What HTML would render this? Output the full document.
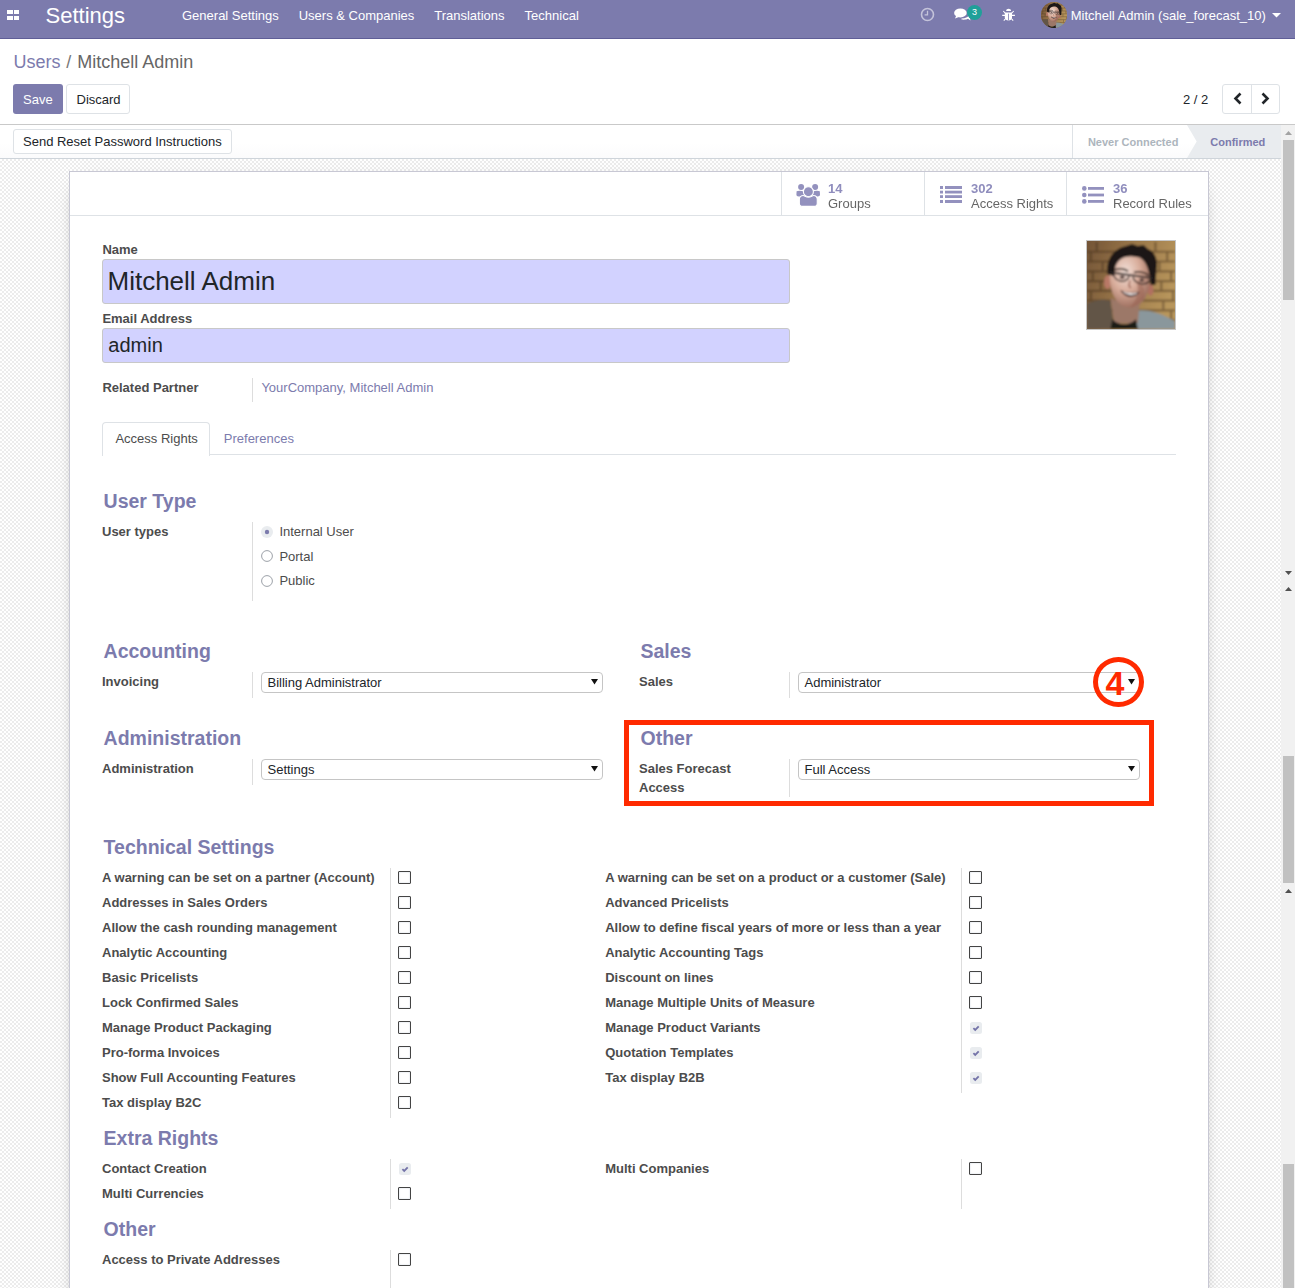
<!DOCTYPE html>
<html><head><meta charset="utf-8"><style>
html,body{margin:0;padding:0;width:1295px;height:1288px;overflow:hidden;background:#fff;position:relative;font-family:"Liberation Sans", sans-serif;}
.t{position:absolute;white-space:nowrap;line-height:1;font-family:"Liberation Sans", sans-serif;}
</style></head><body>
<svg width="0" height="0" style="position:absolute"><defs>
<filter id="bl" x="-5%" y="-5%" width="110%" height="110%"><feGaussianBlur stdDeviation="1.0"/></filter>
<linearGradient id="bgg" x1="0" y1="0" x2="1" y2="0.3"><stop offset="0" stop-color="#6e5034"/><stop offset="0.5" stop-color="#987548"/><stop offset="1" stop-color="#b8965c"/></linearGradient>
<radialGradient id="skin" cx="0.4" cy="0.35" r="0.65"><stop offset="0" stop-color="#f2e0d8"/><stop offset="0.55" stop-color="#d8ac9a"/><stop offset="1" stop-color="#a07262"/></radialGradient>
<g id="face"><g filter="url(#bl)">
<rect x="-5" y="-5" width="100" height="100" fill="url(#bgg)"/>
<g stroke="#3e2a18" stroke-width="2.2" opacity="0.45">
<path d="M0 11H90M0 21H90M0 31H90M0 41H90M0 51H90M0 61H90M0 71H90M0 81H90"/>
<path d="M70 1V11M82 11V21M74 21V31M86 31V41M76 41V51M88 51V61M78 61V71M86 71V81M10 1V11M4 11V21M16 21V31M6 31V41M14 41V51M4 51V61"/>
</g>
<path d="M0 64 C8 60 16 59 24 61 L28 90 H0Z" fill="#625446"/>
<path d="M46 72 C60 68 76 74 90 82 V90 H42Z" fill="#8a979c"/>
<path d="M24 58 C30 62 48 64 54 60 L52 84 H28Z" fill="#9c7868"/>
<path d="M26 80 C32 87 44 87 50 80 L52 90 H24Z" fill="#1e1a18"/>
<ellipse cx="21" cy="42" rx="3.6" ry="7" fill="#b87866"/>
<ellipse cx="65" cy="50" rx="3" ry="6" fill="#b07060"/>
<path d="M23 36 C22 22 30 13 44 12 C58 12 66 22 64 40 C64 56 56 68 44 68 C32 68 24 56 23 36Z" fill="url(#skin)"/>
<path d="M50 40 C56 42 60 48 58 58 C54 64 48 67 44 68 C52 60 54 50 50 40Z" fill="#9a6454" opacity="0.55"/>
<path d="M21 34 C19 20 26 8 40 5 L46 3 L52 5 L58 4 L62 8 C70 11 73 20 71 30 L70 45 L65 45 C64 32 62 22 54 17 C44 14 33 15 29 26 L28 36Z" fill="#1c1816"/>
<path d="M28 30 C32 28 38 28 42 31 M48 32 C53 31 59 32 63 35" stroke="#3a2a24" stroke-width="1.8" fill="none"/>
<path d="M23 32 L67 38" stroke="#2a2222" stroke-width="2"/>
<path d="M27 33 C28 42 40 44 43 36 M47 37 C49 45 62 46 65 39" stroke="#3a2c28" stroke-width="1.5" fill="none"/>
<ellipse cx="36" cy="37" rx="2.6" ry="1.6" fill="#4a3430"/>
<ellipse cx="56" cy="40" rx="2.6" ry="1.6" fill="#4a3430"/>
<path d="M44 40 C43 44 42 47 45 48" stroke="#a06858" stroke-width="1.4" fill="none"/>
<path d="M34 50 C40 53 48 54 54 52 C50 59 39 59 34 50Z" fill="#3a2020"/>
<path d="M36 51.5 C41 53.5 47 54 52 53 C49 56 41 56.5 36 51.5Z" fill="#f4eeec"/>
</g></g></defs></svg>
<div style="position:absolute;left:0px;top:0px;width:1295px;height:38px;background:#7C7BAD;"></div>
<div style="position:absolute;left:0px;top:38px;width:1295px;height:1px;background:#5f5e97;"></div>
<div style="position:absolute;left:7px;top:9.8px;width:5.6px;height:4.6px;background:#fff"></div>
<div style="position:absolute;left:13.6px;top:9.8px;width:5.6px;height:4.6px;background:#fff"></div>
<div style="position:absolute;left:7px;top:15.700000000000001px;width:5.6px;height:4.6px;background:#fff"></div>
<div style="position:absolute;left:13.6px;top:15.700000000000001px;width:5.6px;height:4.6px;background:#fff"></div>
<div class="t" style="left:45.60px;top:4.58px;font-size:22px;color:#fff;">Settings</div>
<div class="t" style="left:182.00px;top:9.40px;font-size:13px;color:#fff;">General Settings</div>
<div class="t" style="left:298.70px;top:9.40px;font-size:13px;color:#fff;">Users &amp; Companies</div>
<div class="t" style="left:434.20px;top:9.40px;font-size:13px;color:#fff;">Translations</div>
<div class="t" style="left:524.60px;top:9.40px;font-size:13px;color:#fff;">Technical</div>
<svg style="position:absolute;left:919px;top:6px" width="17" height="17" viewBox="0 0 17 17"><circle cx="8.5" cy="8.5" r="6" fill="none" stroke="rgba(255,255,255,0.55)" stroke-width="1.6"/><path d="M8.5 4.8V8.8H5.6" fill="none" stroke="rgba(255,255,255,0.55)" stroke-width="1.3"/></svg>
<svg style="position:absolute;left:954px;top:8px" width="18" height="14" viewBox="0 0 18 14"><ellipse cx="6.4" cy="4.9" rx="6.3" ry="4.5" fill="#fff"/><path d="M2.2 7.8 L1 10.6 L5.6 8.8 Z" fill="#fff"/><path d="M7.5 11.6 C10.5 12 13 11.5 14 10.8 L16.5 12.6 L15.8 9.8 C16.6 8.8 16.8 7.6 16.2 6.4 C15 8.8 11.5 10.2 7.5 10.4 Z" fill="#fff"/></svg>
<div style="position:absolute;left:967px;top:4.6px;width:15px;height:15px;border-radius:50%;background:#1fa099;color:#fff;font-size:9px;line-height:15px;text-align:center;font-family:Liberation Sans,sans-serif">3</div>
<svg style="position:absolute;left:995px;top:4px" width="26" height="20" viewBox="0 0 26 20"><path d="M11.1 6.9 C11.1 4 16.1 4 16.1 6.9 Z" fill="#fff"/><path d="M9.8 8.4 H17 V13.3 C17 15.6 15.5 16.4 13.4 16.4 C11.3 16.4 9.8 15.6 9.8 13.3 Z" fill="#fff"/><rect x="13" y="9.6" width="0.9" height="6.8" fill="#8d8cba"/><path d="M8.3 7 L10.5 9.5 M18.7 7 L16.4 9.5 M7.2 11.4 H10 M17 11.4 H19.9 M8.8 16.6 L10.7 14.5 M18.2 16.6 L16.3 14.5" stroke="#fff" stroke-width="1.1"/></svg>
<div style="position:absolute;left:1041px;top:2px;width:26px;height:26px;border-radius:50%;overflow:hidden;background:#8a6a45"><svg width="26" height="26" viewBox="0 0 90 90" style="display:block"><use href="#face"/></svg></div>
<div class="t" style="left:1070.70px;top:9.00px;font-size:13px;color:#fff;">Mitchell Admin (sale_forecast_10)</div>
<svg style="position:absolute;left:1272px;top:13px" width="9" height="5" viewBox="0 0 9 5"><path d="M0 0H9L4.5 4.5Z" fill="#fff"/></svg>
<div class="t" style="left:13.60px;top:52.96px;font-size:18px;color:#666;"><span style="color:#7C7BAD">Users</span> <span style="color:#777;margin-left:0.6px">/</span> <span style="color:#666;margin-left:1px">Mitchell Admin</span></div>
<div style="position:absolute;left:13px;top:84px;width:50px;height:30px;border-radius:3px;background:#7C7BAD;"></div>
<div class="t" style="left:23.00px;top:93.00px;font-size:13px;color:#fff;">Save</div>
<div style="position:absolute;left:66px;top:84px;width:62px;height:28px;border-radius:3px;border:1px solid #dee2e6;background:#fff"></div>
<div class="t" style="left:76.50px;top:93.00px;font-size:13px;color:#212529;">Discard</div>
<div class="t" style="left:1183.00px;top:93.00px;font-size:13px;color:#212529;">2 / 2</div>
<div style="position:absolute;left:1222px;top:84px;width:56px;height:28px;border-radius:3px;border:1px solid #dee2e6;background:#fff"></div>
<div style="position:absolute;left:1251px;top:85px;width:1px;height:28px;background:#dee2e6;"></div>
<svg style="position:absolute;left:1232.8px;top:92.4px" width="10" height="13" viewBox="0 0 10 13"><path d="M7.5 1.5 L2.5 6.5 L7.5 11.5" fill="none" stroke="#212529" stroke-width="2.6"/></svg>
<svg style="position:absolute;left:1259.7px;top:92.4px" width="10" height="13" viewBox="0 0 10 13"><path d="M2.5 1.5 L7.5 6.5 L2.5 11.5" fill="none" stroke="#212529" stroke-width="2.6"/></svg>
<div style="position:absolute;left:0px;top:124px;width:1295px;height:1px;background:#c9c9c9;"></div>
<div style="position:absolute;left:0px;top:125px;width:1281px;height:33px;background:linear-gradient(#fff 55%,#fbfbfc);"></div>
<div style="position:absolute;left:0px;top:158px;width:1281px;height:1px;background:#ced4da;"></div>
<div style="position:absolute;left:13px;top:129px;width:217px;height:23px;border-radius:3px;border:1px solid #dee2e6;background:#fff"></div>
<div class="t" style="left:23.00px;top:134.90px;font-size:13px;color:#212529;">Send Reset Password Instructions</div>
<div style="position:absolute;left:1072px;top:125px;width:1px;height:33px;background:#dee2e6;"></div>
<svg style="position:absolute;left:1187px;top:125px" width="94" height="33" viewBox="0 0 94 33"><path d="M0 0H94V33H0L9.7 16.5Z" fill="#e9ecef"/></svg>
<div class="t" style="left:1087.90px;top:136.99px;font-size:11px;color:#adb5bd;font-weight:bold;">Never Connected</div>
<div class="t" style="left:1210.30px;top:136.99px;font-size:11px;color:#7C7BAD;font-weight:bold;">Confirmed</div>
<div style="position:absolute;left:0;top:159px;width:1281px;height:1129px;background-color:#fff;background-image:conic-gradient(#ececec 25%,#fff 0 50%,#ececec 0 75%,#fff 0);background-size:4px 4px;"></div>
<div style="position:absolute;left:1281px;top:125px;width:14px;height:1163px;background:#f1f1f1;"></div>
<svg style="position:absolute;left:1285px;top:131px" width="7" height="4" viewBox="0 0 7 4"><path d="M0 4H7L3.5 0Z" fill="#a3a3a3"/></svg>
<div style="position:absolute;left:1283px;top:140px;width:11px;height:160px;background:#c1c1c1;"></div>
<svg style="position:absolute;left:1285px;top:571px" width="7" height="4" viewBox="0 0 7 4"><path d="M0 0H7L3.5 4Z" fill="#505050"/></svg>
<svg style="position:absolute;left:1285px;top:587px" width="7" height="4" viewBox="0 0 7 4"><path d="M0 4H7L3.5 0Z" fill="#505050"/></svg>
<div style="position:absolute;left:1283px;top:756px;width:11px;height:127px;background:#c1c1c1;"></div>
<svg style="position:absolute;left:1285px;top:889px" width="7" height="4" viewBox="0 0 7 4"><path d="M0 4H7L3.5 0Z" fill="#505050"/></svg>
<div style="position:absolute;left:1283px;top:1164px;width:11px;height:124px;background:#c1c1c1;"></div>
<div style="position:absolute;left:69px;top:171px;width:1138px;height:1200px;background:#fff;border:1px solid #c8c8d4;box-shadow:0 5px 20px -15px #000;"></div>
<div style="position:absolute;left:70px;top:215px;width:1138px;height:1px;background:#dee2e6;"></div>
<div style="position:absolute;left:781px;top:172px;width:1px;height:43px;background:#dee2e6;"></div>
<div style="position:absolute;left:924px;top:172px;width:1px;height:43px;background:#dee2e6;"></div>
<div style="position:absolute;left:1066px;top:172px;width:1px;height:43px;background:#dee2e6;"></div>
<svg style="position:absolute;left:792px;top:180px" width="32" height="30" viewBox="0 0 32 30"><circle cx="9.1" cy="6.9" r="3.0" fill="#9391be"/><circle cx="23.1" cy="6.9" r="3.0" fill="#9391be"/><path d="M4.6 11.2 C6 10.4 9.5 10.5 11.6 11.4 C11.8 13 12.2 14.3 12.8 15.2 C10.5 16.1 8.6 16.5 6.8 16.5 C5.2 16.5 4.4 15.8 4.4 14.6 Z" fill="#9391be"/><path d="M27.8 11.2 C26.4 10.4 22.9 10.5 20.8 11.4 C20.6 13 20.2 14.3 19.6 15.2 C21.9 16.1 23.8 16.5 25.6 16.5 C27.2 16.5 28 15.8 28 14.6 Z" fill="#9391be"/><circle cx="16.4" cy="11.7" r="5.0" fill="#9391be" stroke="#fff" stroke-width="1.1"/><path d="M7.35 19.6 C7.35 17.2 9.2 15.55 11.2 15.55 C12.5 15.55 14 17.1 16.4 17.1 C18.8 17.1 20.3 15.55 21.6 15.55 C23.6 15.55 25.25 17.2 25.25 19.6 V23.5 C25.25 25.4 23.9 26.35 22 26.35 H10.6 C8.7 26.35 7.35 25.4 7.35 23.5 Z" fill="#9391be" stroke="#fff" stroke-width="1.1"/></svg>
<div class="t" style="left:828.40px;top:182.00px;font-size:13px;color:#8f8dbd;font-weight:bold;will-change:transform;">14</div>
<div class="t" style="left:828.40px;top:197.00px;font-size:13px;color:#666;will-change:transform;">Groups</div>
<svg style="position:absolute;left:940px;top:186px" width="22" height="17" viewBox="0 0 22 17"><g fill="#9391be"><rect x="0" y="0" width="3" height="3"/><rect x="5" y="0" width="17" height="3"/><rect x="0" y="4.7" width="3" height="2.8"/><rect x="5" y="4.7" width="17" height="2.8"/><rect x="0" y="9.2" width="3" height="2.8"/><rect x="5" y="9.2" width="17" height="2.8"/><rect x="0" y="14" width="3" height="3"/><rect x="5" y="14" width="17" height="3"/></g></svg>
<div class="t" style="left:971.00px;top:182.00px;font-size:13px;color:#8f8dbd;font-weight:bold;will-change:transform;">302</div>
<div class="t" style="left:971.00px;top:197.00px;font-size:13px;color:#666;will-change:transform;">Access Rights</div>
<svg style="position:absolute;left:1082px;top:186px" width="22" height="18" viewBox="0 0 22 18"><g fill="#9391be"><circle cx="2.3" cy="2.4" r="2.3"/><circle cx="2.3" cy="9" r="2.3"/><circle cx="2.3" cy="15.4" r="2.3"/><rect x="6" y="1" width="16" height="2.8"/><rect x="6" y="7.6" width="16" height="2.8"/><rect x="6" y="14" width="16" height="2.8"/></g></svg>
<div class="t" style="left:1113.20px;top:182.00px;font-size:13px;color:#8f8dbd;font-weight:bold;will-change:transform;">36</div>
<div class="t" style="left:1113.20px;top:197.00px;font-size:13px;color:#666;will-change:transform;">Record Rules</div>
<div style="position:absolute;left:1086px;top:240px;width:88px;height:88px;border:1px solid #c6c6c6;overflow:hidden"><svg width="88" height="88" viewBox="0 0 90 90" style="display:block"><use href="#face"/></svg></div>
<div class="t" style="left:102.40px;top:242.80px;font-size:13px;color:#4c4c4c;font-weight:bold;">Name</div>
<div style="position:absolute;left:102px;top:259px;width:686px;height:43px;background:#d2d2ff;border:1px solid #c8c8c8;border-radius:3px"></div>
<div class="t" style="left:107.50px;top:268.19px;font-size:26px;color:#212529;">Mitchell Admin</div>
<div class="t" style="left:102.40px;top:311.70px;font-size:13px;color:#4c4c4c;font-weight:bold;">Email Address</div>
<div style="position:absolute;left:102px;top:328px;width:686px;height:33px;background:#d2d2ff;border:1px solid #c8c8c8;border-radius:3px"></div>
<div class="t" style="left:108.30px;top:334.82px;font-size:20px;color:#212529;">admin</div>
<div class="t" style="left:102.40px;top:381.20px;font-size:13px;color:#4c4c4c;font-weight:bold;">Related Partner</div>
<div style="position:absolute;left:252px;top:378px;width:1px;height:24px;background:#dddddd;"></div>
<div class="t" style="left:261.40px;top:381.20px;font-size:13px;color:#7C7BAD;">YourCompany, Mitchell Admin</div>
<div style="position:absolute;left:209px;top:454px;width:967px;height:1px;background:#dee2e6;"></div>
<div style="position:absolute;left:102px;top:422px;width:106px;height:33px;border:1px solid #dee2e6;border-bottom:none;border-radius:4px 4px 0 0;background:#fff"></div>
<div class="t" style="left:115.40px;top:432.20px;font-size:13px;color:#4c4c4c;">Access Rights</div>
<div class="t" style="left:223.80px;top:432.20px;font-size:13px;color:#7C7BAD;">Preferences</div>
<div class="t" style="left:103.60px;top:492.19px;font-size:19.5px;color:#7C7BAD;font-weight:bold;">User Type</div>
<div class="t" style="left:102.00px;top:525.20px;font-size:13px;color:#4c4c4c;font-weight:bold;">User types</div>
<div style="position:absolute;left:252px;top:522px;width:1px;height:79px;background:#dddddd;"></div>
<svg style="position:absolute;left:261px;top:525.9px" width="12" height="12" viewBox="0 0 12 12"><circle cx="6" cy="6" r="6" fill="#e9ecef"/><circle cx="6" cy="6" r="2.2" fill="#7C7BAD"/></svg>
<div class="t" style="left:279.40px;top:524.90px;font-size:13px;color:#4c4c4c;">Internal User</div>
<svg style="position:absolute;left:261px;top:550.1px" width="12" height="12" viewBox="0 0 12 12"><circle cx="6" cy="6" r="5.4" fill="#fff" stroke="#9ca1a8" stroke-width="1"/></svg>
<div class="t" style="left:279.40px;top:549.70px;font-size:13px;color:#4c4c4c;">Portal</div>
<svg style="position:absolute;left:261px;top:574.5px" width="12" height="12" viewBox="0 0 12 12"><circle cx="6" cy="6" r="5.4" fill="#fff" stroke="#9ca1a8" stroke-width="1"/></svg>
<div class="t" style="left:279.40px;top:574.10px;font-size:13px;color:#4c4c4c;">Public</div>
<div class="t" style="left:103.60px;top:642.19px;font-size:19.5px;color:#7C7BAD;font-weight:bold;">Accounting</div>
<div class="t" style="left:640.50px;top:642.19px;font-size:19.5px;color:#7C7BAD;font-weight:bold;">Sales</div>
<div class="t" style="left:102.00px;top:674.80px;font-size:13px;color:#4c4c4c;font-weight:bold;">Invoicing</div>
<div class="t" style="left:639.00px;top:674.80px;font-size:13px;color:#4c4c4c;font-weight:bold;">Sales</div>
<div style="position:absolute;left:252px;top:672px;width:1px;height:26px;background:#dddddd;"></div>
<div style="position:absolute;left:789px;top:672px;width:1px;height:26px;background:#dddddd;"></div>
<div style="position:absolute;left:261px;top:672px;width:340px;height:19px;border:1px solid #c5c5c5;border-radius:4px;background:#fff"></div>
<div class="t" style="left:267.50px;top:675.70px;font-size:13px;color:#212529;">Billing Administrator</div>
<svg style="position:absolute;left:591px;top:679px" width="7" height="6" viewBox="0 0 7 6"><path d="M0 0H7L3.5 5.5Z" fill="#111"/></svg>
<div style="position:absolute;left:798px;top:672px;width:340px;height:19px;border:1px solid #c5c5c5;border-radius:4px;background:#fff"></div>
<div class="t" style="left:804.50px;top:675.70px;font-size:13px;color:#212529;">Administrator</div>
<svg style="position:absolute;left:1128px;top:679px" width="7" height="6" viewBox="0 0 7 6"><path d="M0 0H7L3.5 5.5Z" fill="#111"/></svg>
<div class="t" style="left:103.60px;top:729.49px;font-size:19.5px;color:#7C7BAD;font-weight:bold;">Administration</div>
<div class="t" style="left:640.50px;top:729.49px;font-size:19.5px;color:#7C7BAD;font-weight:bold;">Other</div>
<div class="t" style="left:102.00px;top:761.80px;font-size:13px;color:#4c4c4c;font-weight:bold;">Administration</div>
<div class="t" style="left:639.00px;top:761.80px;font-size:13px;color:#4c4c4c;font-weight:bold;">Sales Forecast</div>
<div class="t" style="left:639.00px;top:781.30px;font-size:13px;color:#4c4c4c;font-weight:bold;">Access</div>
<div style="position:absolute;left:252px;top:759px;width:1px;height:26px;background:#dddddd;"></div>
<div style="position:absolute;left:789px;top:759px;width:1px;height:38px;background:#dddddd;"></div>
<div style="position:absolute;left:261px;top:759px;width:340px;height:19px;border:1px solid #c5c5c5;border-radius:4px;background:#fff"></div>
<div class="t" style="left:267.50px;top:762.70px;font-size:13px;color:#212529;">Settings</div>
<svg style="position:absolute;left:591px;top:766px" width="7" height="6" viewBox="0 0 7 6"><path d="M0 0H7L3.5 5.5Z" fill="#111"/></svg>
<div style="position:absolute;left:798px;top:759px;width:340px;height:19px;border:1px solid #c5c5c5;border-radius:4px;background:#fff"></div>
<div class="t" style="left:804.50px;top:762.70px;font-size:13px;color:#212529;">Full Access</div>
<svg style="position:absolute;left:1128px;top:766px" width="7" height="6" viewBox="0 0 7 6"><path d="M0 0H7L3.5 5.5Z" fill="#111"/></svg>
<div class="t" style="left:103.60px;top:838.19px;font-size:19.5px;color:#7C7BAD;font-weight:bold;">Technical Settings</div>
<div class="t" style="left:102.00px;top:871.20px;font-size:13px;color:#4c4c4c;font-weight:bold;">A warning can be set on a partner (Account)</div>
<div style="position:absolute;left:398px;top:871px;width:11.2px;height:11.2px;border:1.4px solid #444;border-radius:1px;background:#fff;box-shadow:inset 0 0 1.5px #b8c4d0"></div>
<div class="t" style="left:102.00px;top:896.20px;font-size:13px;color:#4c4c4c;font-weight:bold;">Addresses in Sales Orders</div>
<div style="position:absolute;left:398px;top:896px;width:11.2px;height:11.2px;border:1.4px solid #444;border-radius:1px;background:#fff;box-shadow:inset 0 0 1.5px #b8c4d0"></div>
<div class="t" style="left:102.00px;top:921.20px;font-size:13px;color:#4c4c4c;font-weight:bold;">Allow the cash rounding management</div>
<div style="position:absolute;left:398px;top:921px;width:11.2px;height:11.2px;border:1.4px solid #444;border-radius:1px;background:#fff;box-shadow:inset 0 0 1.5px #b8c4d0"></div>
<div class="t" style="left:102.00px;top:946.20px;font-size:13px;color:#4c4c4c;font-weight:bold;">Analytic Accounting</div>
<div style="position:absolute;left:398px;top:946px;width:11.2px;height:11.2px;border:1.4px solid #444;border-radius:1px;background:#fff;box-shadow:inset 0 0 1.5px #b8c4d0"></div>
<div class="t" style="left:102.00px;top:971.20px;font-size:13px;color:#4c4c4c;font-weight:bold;">Basic Pricelists</div>
<div style="position:absolute;left:398px;top:971px;width:11.2px;height:11.2px;border:1.4px solid #444;border-radius:1px;background:#fff;box-shadow:inset 0 0 1.5px #b8c4d0"></div>
<div class="t" style="left:102.00px;top:996.20px;font-size:13px;color:#4c4c4c;font-weight:bold;">Lock Confirmed Sales</div>
<div style="position:absolute;left:398px;top:996px;width:11.2px;height:11.2px;border:1.4px solid #444;border-radius:1px;background:#fff;box-shadow:inset 0 0 1.5px #b8c4d0"></div>
<div class="t" style="left:102.00px;top:1021.20px;font-size:13px;color:#4c4c4c;font-weight:bold;">Manage Product Packaging</div>
<div style="position:absolute;left:398px;top:1021px;width:11.2px;height:11.2px;border:1.4px solid #444;border-radius:1px;background:#fff;box-shadow:inset 0 0 1.5px #b8c4d0"></div>
<div class="t" style="left:102.00px;top:1046.20px;font-size:13px;color:#4c4c4c;font-weight:bold;">Pro-forma Invoices</div>
<div style="position:absolute;left:398px;top:1046px;width:11.2px;height:11.2px;border:1.4px solid #444;border-radius:1px;background:#fff;box-shadow:inset 0 0 1.5px #b8c4d0"></div>
<div class="t" style="left:102.00px;top:1071.20px;font-size:13px;color:#4c4c4c;font-weight:bold;">Show Full Accounting Features</div>
<div style="position:absolute;left:398px;top:1071px;width:11.2px;height:11.2px;border:1.4px solid #444;border-radius:1px;background:#fff;box-shadow:inset 0 0 1.5px #b8c4d0"></div>
<div class="t" style="left:102.00px;top:1096.20px;font-size:13px;color:#4c4c4c;font-weight:bold;">Tax display B2C</div>
<div style="position:absolute;left:398px;top:1096px;width:11.2px;height:11.2px;border:1.4px solid #444;border-radius:1px;background:#fff;box-shadow:inset 0 0 1.5px #b8c4d0"></div>
<div class="t" style="left:605.20px;top:871.20px;font-size:13px;color:#4c4c4c;font-weight:bold;">A warning can be set on a product or a customer (Sale)</div>
<div style="position:absolute;left:969px;top:871px;width:11.2px;height:11.2px;border:1.4px solid #444;border-radius:1px;background:#fff;box-shadow:inset 0 0 1.5px #b8c4d0"></div>
<div class="t" style="left:605.20px;top:896.20px;font-size:13px;color:#4c4c4c;font-weight:bold;">Advanced Pricelists</div>
<div style="position:absolute;left:969px;top:896px;width:11.2px;height:11.2px;border:1.4px solid #444;border-radius:1px;background:#fff;box-shadow:inset 0 0 1.5px #b8c4d0"></div>
<div class="t" style="left:605.20px;top:921.20px;font-size:13px;color:#4c4c4c;font-weight:bold;">Allow to define fiscal years of more or less than a year</div>
<div style="position:absolute;left:969px;top:921px;width:11.2px;height:11.2px;border:1.4px solid #444;border-radius:1px;background:#fff;box-shadow:inset 0 0 1.5px #b8c4d0"></div>
<div class="t" style="left:605.20px;top:946.20px;font-size:13px;color:#4c4c4c;font-weight:bold;">Analytic Accounting Tags</div>
<div style="position:absolute;left:969px;top:946px;width:11.2px;height:11.2px;border:1.4px solid #444;border-radius:1px;background:#fff;box-shadow:inset 0 0 1.5px #b8c4d0"></div>
<div class="t" style="left:605.20px;top:971.20px;font-size:13px;color:#4c4c4c;font-weight:bold;">Discount on lines</div>
<div style="position:absolute;left:969px;top:971px;width:11.2px;height:11.2px;border:1.4px solid #444;border-radius:1px;background:#fff;box-shadow:inset 0 0 1.5px #b8c4d0"></div>
<div class="t" style="left:605.20px;top:996.20px;font-size:13px;color:#4c4c4c;font-weight:bold;">Manage Multiple Units of Measure</div>
<div style="position:absolute;left:969px;top:996px;width:11.2px;height:11.2px;border:1.4px solid #444;border-radius:1px;background:#fff;box-shadow:inset 0 0 1.5px #b8c4d0"></div>
<div class="t" style="left:605.20px;top:1021.20px;font-size:13px;color:#4c4c4c;font-weight:bold;">Manage Product Variants</div>
<svg style="position:absolute;left:970px;top:1022px" width="12" height="12" viewBox="0 0 12 12"><rect width="12" height="12" rx="2.5" fill="#e9ecef"/><path d="M3.4 6.2 L5.2 7.9 L8.7 4.3" fill="none" stroke="#7473a8" stroke-width="1.8"/></svg>
<div class="t" style="left:605.20px;top:1046.20px;font-size:13px;color:#4c4c4c;font-weight:bold;">Quotation Templates</div>
<svg style="position:absolute;left:970px;top:1047px" width="12" height="12" viewBox="0 0 12 12"><rect width="12" height="12" rx="2.5" fill="#e9ecef"/><path d="M3.4 6.2 L5.2 7.9 L8.7 4.3" fill="none" stroke="#7473a8" stroke-width="1.8"/></svg>
<div class="t" style="left:605.20px;top:1071.20px;font-size:13px;color:#4c4c4c;font-weight:bold;">Tax display B2B</div>
<svg style="position:absolute;left:970px;top:1072px" width="12" height="12" viewBox="0 0 12 12"><rect width="12" height="12" rx="2.5" fill="#e9ecef"/><path d="M3.4 6.2 L5.2 7.9 L8.7 4.3" fill="none" stroke="#7473a8" stroke-width="1.8"/></svg>
<div style="position:absolute;left:390px;top:868px;width:1px;height:250px;background:#dddddd;"></div>
<div style="position:absolute;left:961px;top:868px;width:1px;height:225px;background:#dddddd;"></div>
<div class="t" style="left:103.60px;top:1129.29px;font-size:19.5px;color:#7C7BAD;font-weight:bold;">Extra Rights</div>
<div class="t" style="left:102.00px;top:1162.30px;font-size:13px;color:#4c4c4c;font-weight:bold;">Contact Creation</div>
<svg style="position:absolute;left:399px;top:1163px" width="12" height="12" viewBox="0 0 12 12"><rect width="12" height="12" rx="2.5" fill="#e9ecef"/><path d="M3.4 6.2 L5.2 7.9 L8.7 4.3" fill="none" stroke="#7473a8" stroke-width="1.8"/></svg>
<div class="t" style="left:102.00px;top:1187.30px;font-size:13px;color:#4c4c4c;font-weight:bold;">Multi Currencies</div>
<div style="position:absolute;left:398px;top:1187px;width:11.2px;height:11.2px;border:1.4px solid #444;border-radius:1px;background:#fff;box-shadow:inset 0 0 1.5px #b8c4d0"></div>
<div class="t" style="left:605.20px;top:1162.30px;font-size:13px;color:#4c4c4c;font-weight:bold;">Multi Companies</div>
<div style="position:absolute;left:969px;top:1162px;width:11.2px;height:11.2px;border:1.4px solid #444;border-radius:1px;background:#fff;box-shadow:inset 0 0 1.5px #b8c4d0"></div>
<div style="position:absolute;left:390px;top:1159px;width:1px;height:50px;background:#dddddd;"></div>
<div style="position:absolute;left:961px;top:1159px;width:1px;height:50px;background:#dddddd;"></div>
<div class="t" style="left:103.60px;top:1220.49px;font-size:19.5px;color:#7C7BAD;font-weight:bold;">Other</div>
<div class="t" style="left:102.00px;top:1253.00px;font-size:13px;color:#4c4c4c;font-weight:bold;">Access to Private Addresses</div>
<div style="position:absolute;left:398px;top:1253px;width:11.2px;height:11.2px;border:1.4px solid #444;border-radius:1px;background:#fff;box-shadow:inset 0 0 1.5px #b8c4d0"></div>
<div style="position:absolute;left:390px;top:1250px;width:1px;height:38px;background:#dddddd;"></div>
<div style="position:absolute;left:623.5px;top:719.5px;width:520px;height:76px;border:5px solid #ff2a00"></div>
<div style="position:absolute;left:1092.8px;top:656.8px;width:40.8px;height:40.2px;border:5px solid #ff2a00;border-radius:50%"></div>
<div class="t" style="left:1105.40px;top:665.72px;font-size:34px;color:#ff2a00;font-weight:bold;">4</div>
</body></html>
